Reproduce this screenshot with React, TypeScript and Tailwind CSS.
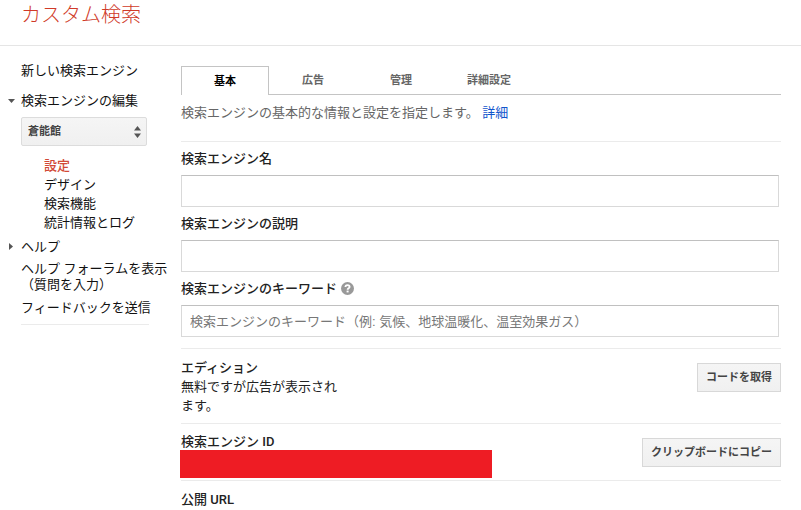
import { useState } from 'react';

const tabs = ['基本', '広告', '管理', '詳細設定'];
const subItems = ['設定', 'デザイン', '検索機能', '統計情報とログ'];

const buttonClass =
  'h-[29px] shrink-0 border border-[#d8d8d8] bg-linear-to-b from-[#f5f5f5] to-[#f0f0f0] px-2 text-[11px] font-bold text-[#444]';

const headingClass = "font-['Roboto','Noto_Sans_CJK_JP',sans-serif] font-medium";

const Sidebar = () => (
  <nav className="w-[181px] shrink-0 pt-[15px] text-[#111]">
    <div className="pr-3 pl-[21px] leading-[19px]">
      <a href="#new">新しい検索エンジン</a>
    </div>

    <div className="mt-[11px] flex items-center pl-2 leading-[19px]">
      <svg className="mr-[6px] h-[7px] w-[7px]" viewBox="0 0 7 7" fill="#555">
        <path d="M0 2h7L3.5 6z" />
      </svg>
      <a href="#edit">検索エンジンの編集</a>
    </div>

    <div className="relative mt-[7px] ml-[21px] w-[126px]">
      <select
        aria-label="検索エンジン"
        className="block h-[29px] w-full appearance-none rounded-[2px] border border-[#dcdcdc] bg-linear-to-b from-[#f5f5f5] to-[#f0f0f0] pl-[6px] text-[11px] font-bold text-[#444]"
      >
        <option>蒼能館</option>
      </select>
      <svg
        className="pointer-events-none absolute top-[9px] right-[6px] h-3 w-[7px]"
        viewBox="0 0 7 12"
        fill="#555"
      >
        <path d="M0 4.5h7L3.5 0zM0 7.5h7L3.5 12z" />
      </svg>
    </div>

    <ul className="mt-[10px] pl-11 leading-[19px]">
      {subItems.map((item, i) => (
        <li key={item}>
          <a href="#sub" className={i === 0 ? 'font-medium text-[#d14836]' : ''}>
            {item}
          </a>
        </li>
      ))}
    </ul>

    <div className="mt-[5px] flex items-center pl-2 leading-[19px]">
      <svg className="mr-[6px] h-[7px] w-[7px]" viewBox="0 0 7 7" fill="#555">
        <path d="M1 0v7L5 3.5z" />
      </svg>
      <a href="#help">ヘルプ</a>
    </div>

    <div className="mt-[5px] pl-[21px] leading-4 whitespace-nowrap">
      <a href="#forum">
        ヘルプ フォーラムを表示
        <br />
        （質問を入力）
      </a>
    </div>
    <div className="mt-[7px] mr-8 ml-[21px] border-b border-[#ebebeb] pb-2 leading-4 whitespace-nowrap">
      <a href="#feedback">フィードバックを送信</a>
    </div>
  </nav>
);

type FieldProps = {
  id: string;
  label: string;
  placeholder?: string;
  help?: boolean;
};

const Field = ({ id, label, placeholder, help }: FieldProps) => (
  <div className="pr-[2px]">
    <div className="flex h-[33px] items-center gap-1">
      <label htmlFor={id} className={headingClass}>
        {label}
      </label>
      {help && (
        <svg className="h-[13px] w-[13px]" viewBox="0 0 13 13" fill="none">
          <circle cx="6.5" cy="6.5" r="6.5" fill="#999" />
          <path
            d="M4.4 5.1c0-1.3.9-2 2.1-2s2.1.7 2.1 1.8c0 1.4-2 1.4-2 2.8"
            stroke="#fff"
            strokeWidth="1.8"
          />
          <rect x="5.6" y="8.6" width="2" height="1.8" fill="#fff" />
        </svg>
      )}
    </div>
    <input
      id={id}
      type="text"
      placeholder={placeholder}
      className="block h-8 w-full border border-[#d9d9d9] border-t-[#c0c0c0] bg-white px-2 placeholder:text-[#777]"
    />
  </div>
);

export default function App() {
  const [active, setActive] = useState(0);

  return (
    <div className="min-h-screen bg-white font-['Liberation_Sans','Noto_Sans_CJK_JP',sans-serif] text-[13px] text-[#222]">
      <header className="h-[46px] border-b border-[#e5e5e5] pl-[21px]">
        <h1 className="text-xl leading-[30px] font-light text-[#d03a28]">カスタム検索</h1>
      </header>

      <div className="flex">
        <Sidebar />

        <main className="min-w-0 flex-1 pt-5 pr-5">
          <div role="tablist" className="flex border-b border-[#c4c4c4]">
            {tabs.map((tab, i) => (
              <button
                key={tab}
                role="tab"
                aria-selected={i === active}
                onClick={() => setActive(i)}
                className={
                  i === active
                    ? '-mb-px h-[29px] w-[88px] border border-b-0 border-[#c4c4c4] bg-white text-[11px] font-bold text-black'
                    : 'h-7 w-[88px] text-[11px] font-bold text-[#666]'
                }
              >
                {tab}
              </button>
            ))}
          </div>

          <p className="border-b border-[#ebebeb] pt-2 pb-[19px] leading-[19px] text-[#666]">
            検索エンジンの基本的な情報と設定を指定します。{' '}
            <a href="#details" className="text-[#15c]">
              詳細
            </a>
          </p>

          <form className="border-b border-[#ebebeb] pb-[11px]">
            <Field id="name" label="検索エンジン名" />
            <Field id="description" label="検索エンジンの説明" />
            <Field
              id="keywords"
              label="検索エンジンのキーワード"
              placeholder="検索エンジンのキーワード（例: 気候、地球温暖化、温室効果ガス）"
              help
            />
          </form>

          <section className="flex items-start justify-between border-b border-[#ebebeb] pt-[9px] pb-2">
            <div className="w-[160px] leading-[19px]">
              <h2 className={headingClass}>エディション</h2>
              <p>無料ですが広告が表示されます。</p>
            </div>
            <button className={`mt-[5px] ${buttonClass}`}>コードを取得</button>
          </section>

          <section className="flex items-start justify-between gap-4 border-b border-[#ebebeb] pt-[9px] pb-[2px]">
            <div className="-ml-px max-w-[312px] flex-1">
              <h2 className={`pl-px leading-[17px] ${headingClass}`}>検索エンジン ID</h2>
              <div className="h-7 bg-[#ee1c24]" />
            </div>
            <button className={`mt-[5px] ${buttonClass}`}>クリップボードにコピー</button>
          </section>

          <section className="pt-[9px] leading-[19px]">
            <h2 className={headingClass}>公開 URL</h2>
          </section>
        </main>
      </div>
    </div>
  );
}
